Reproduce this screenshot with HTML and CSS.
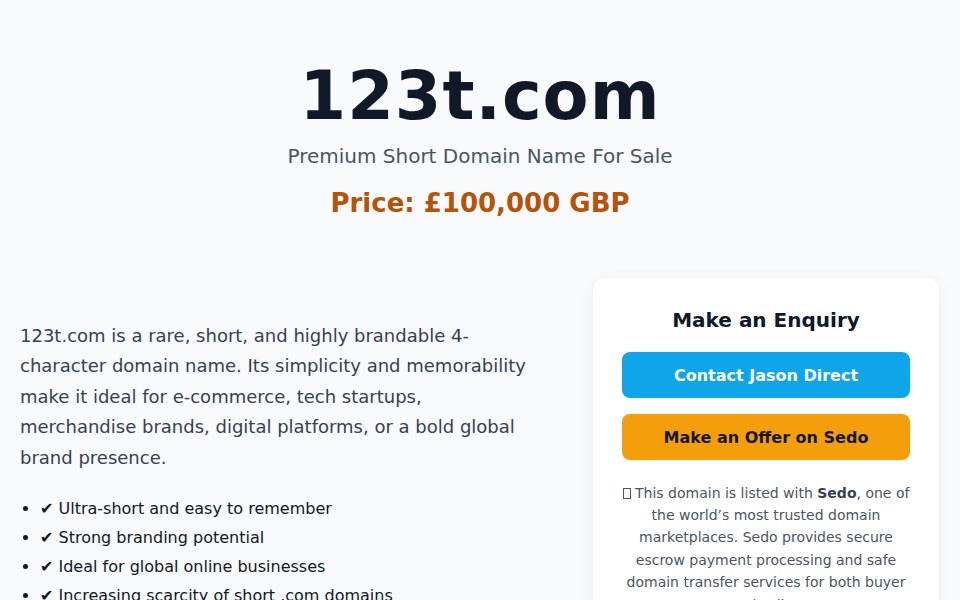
FILE: index.html
```html
<!DOCTYPE html>
<html lang="en">
<head>
<meta charset="utf-8">
<title>123t.com - Premium Domain For Sale</title>
<link rel="stylesheet" href="styles.css">
</head>
<body>
<header class="hero">
  <h1 class="domain">123t.com</h1>
  <p class="tagline">Premium Short Domain Name For Sale</p>
  <p class="price">Price: £100,000 GBP</p>
</header>
<main class="content">
  <section class="about">
    <p class="intro">123t.com is a rare, short, and highly brandable 4-character domain name. Its simplicity and memorability make it ideal for e-commerce, tech startups, merchandise brands, digital platforms, or a bold global brand presence.</p>
    <ul class="features">
      <li>✔ Ultra-short and easy to remember</li>
      <li>✔ Strong branding potential</li>
      <li>✔ Ideal for global online businesses</li>
      <li>✔ Increasing scarcity of short .com domains</li>
    </ul>
  </section>
  <aside class="card">
    <h2 class="card-title">Make an Enquiry</h2>
    <a class="btn btn-blue" href="#">Contact Jason Direct</a>
    <a class="btn btn-orange" href="#">Make an Offer on Sedo</a>
    <p class="note"><span class="tofu" aria-hidden="true"></span> This domain is listed with <strong>Sedo</strong>, one of the world’s most trusted domain marketplaces. Sedo provides secure escrow payment processing and safe domain transfer services for both buyer and seller.</p>
  </aside>
</main>
</body>
</html>
```
FILE: styles.css
```css
* { box-sizing: border-box; }
html, body { margin: 0; padding: 0; }
body {
  background: #f8fafc;
  font-family: "DejaVu Sans", sans-serif;
  color: #1f2937;
}
.hero {
  text-align: center;
  padding: 60px 20px 0;
}
.domain {
  margin: 0;
  font-size: 67px;
  line-height: 1.1;
  font-weight: 700;
  color: #111827;
  letter-spacing: 1px;
}
.tagline {
  margin: 10px 0 0;
  font-size: 20px;
  color: #4b5563;
}
.price {
  margin: 20px 0 0;
  font-size: 26px;
  font-weight: 700;
  color: #b45309;
}
.content {
  display: grid;
  grid-template-columns: 1fr 346px;
  gap: 40px;
  padding: 60px 21px 40px 20px;
  align-items: start;
}
.about { padding-top: 43px; }
.intro {
  margin: 0;
  font-size: 18px;
  line-height: 1.7;
  color: #374151;
  padding-right: 20px;
}
.features {
  margin: 20px 0 0;
  padding-left: 20px;
  font-size: 16px;
  line-height: 29px;
  color: #111827;
}
.card {
  background: #fff;
  border-radius: 12px;
  box-shadow: 0 4px 16px rgba(15, 23, 42, 0.06);
  padding: 30px 29px;
  text-align: center;
}
.card-title {
  margin: 0 0 20px;
  font-size: 20px;
  font-weight: 700;
  color: #111827;
}
.btn {
  display: block;
  padding: 14px 16px 12px;
  border-radius: 8px;
  font-size: 16px;
  font-weight: 700;
  text-decoration: none;
  line-height: 20px;
}
.btn-blue { background: #0ea5e9; color: #fff; }
.btn-orange { background: #f59e0b; color: #111827; margin-top: 16px; }
.note {
  margin: 22px 0 0;
  font-size: 14px;
  line-height: 1.6;
  color: #4b5563;
}
.note strong { color: #374151; }
.tofu {
  display: inline-block;
  width: 8px;
  height: 11px;
  border: 1px solid #4b5563;
  vertical-align: -1px;
}
```
